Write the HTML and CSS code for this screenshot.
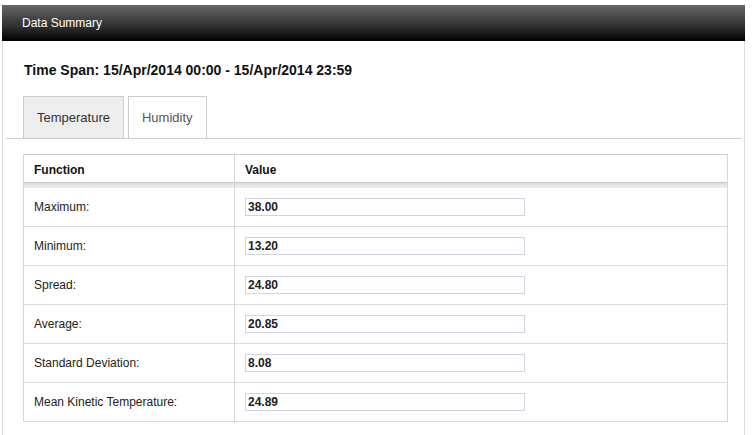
FILE: index.html
```html
<!DOCTYPE html>
<html lang="en">
<head>
  <meta charset="UTF-8" />
  <title>Data Summary</title>
  <link rel="stylesheet" href="styles.css">
</head>
<body>
  <div class="panel">
    <div class="panel-header">Data Summary</div>
    <div class="panel-body">
      <h2 class="time-span">Time Span: 15/Apr/2014 00:00 - 15/Apr/2014 23:59</h2>
      <ul class="tabs">
        <li class="tab active">Temperature</li>
        <li class="tab">Humidity</li>
      </ul>
      <div class="table-wrap">
        <table class="summary">
          <thead>
            <tr>
              <th class="col-func">Function</th>
              <th>Value</th>
            </tr>
          </thead>
          <tbody>
            <tr><td>Maximum:</td><td><input type="text" value="38.00" readonly></td></tr>
            <tr><td>Minimum:</td><td><input type="text" value="13.20" readonly></td></tr>
            <tr><td>Spread:</td><td><input type="text" value="24.80" readonly></td></tr>
            <tr><td>Average:</td><td><input type="text" value="20.85" readonly></td></tr>
            <tr><td>Standard Deviation:</td><td><input type="text" value="8.08" readonly></td></tr>
            <tr><td>Mean Kinetic Temperature:</td><td><input type="text" value="24.89" readonly></td></tr>
          </tbody>
        </table>
      </div>
    </div>
  </div>
</body>
</html>
```

FILE: styles.css
```css
body {
  margin: 0;
  background: #fff;
  font-family: "Liberation Sans", Arial, sans-serif;
  color: #222;
}
.panel {
  margin: 5px 8px 0 2px;
}
.panel-header {
  height: 36px;
  line-height: 36px;
  padding-left: 20px;
  font-size: 12px;
  color: #fff;
  background: linear-gradient(to bottom, #676767, #2a2a2a 65%, #000);
}
.panel-body {
  border-left: 1px solid #ddd;
  border-right: 1px solid #ddd;
  padding-bottom: 30px;
}
.time-span {
  margin: 0;
  padding: 20px 0 0 21px;
  font-size: 14px;
  line-height: 18px;
  color: #111;
}
.tabs {
  list-style: none;
  display: flex;
  gap: 4px;
  margin: 17px 3px 0;
  padding: 0 0 0 17px;
  border-bottom: 1px solid #ccc;
}
.tab {
  padding: 12px 13px;
  font-size: 13px;
  line-height: 17px;
  color: #555;
  border: 1px solid #ccc;
  border-bottom: none;
}
.tab.active {
  background: #eee;
  color: #333;
}
.table-wrap {
  padding: 15px 16px 0 20px;
}
.summary {
  width: 100%;
  border-collapse: separate;
  border-spacing: 0;
  border: 1px solid #d6d6d6;
  border-top-color: #cbcbcb;
  font-size: 12px;
}
.summary th {
  height: 33px;
  padding: 0 10px;
  line-height: 30px;
  vertical-align: top;
  text-align: left;
  color: #111;
  background: linear-gradient(to bottom, #fff 27px, #c6c6c6 27px, #c6c6c6 28px, #dedede 28px, #eeeeee 33px);
}
.summary .col-func {
  width: 190px;
}
.summary th + th,
.summary td + td {
  border-left: 1px solid #d6d6d6;
}
.summary td {
  height: 38px;
  padding: 0 10px;
  vertical-align: middle;
}
.summary tbody tr + tr td {
  border-top: 1px solid #dcdcdc;
}
.summary input {
  box-sizing: border-box;
  width: 280px;
  height: 18px;
  padding: 0 2px;
  border: 1px solid #d2d2e2;
  font-family: inherit;
  font-size: 12px;
  font-weight: bold;
  color: #222;
  outline: none;
}
```
